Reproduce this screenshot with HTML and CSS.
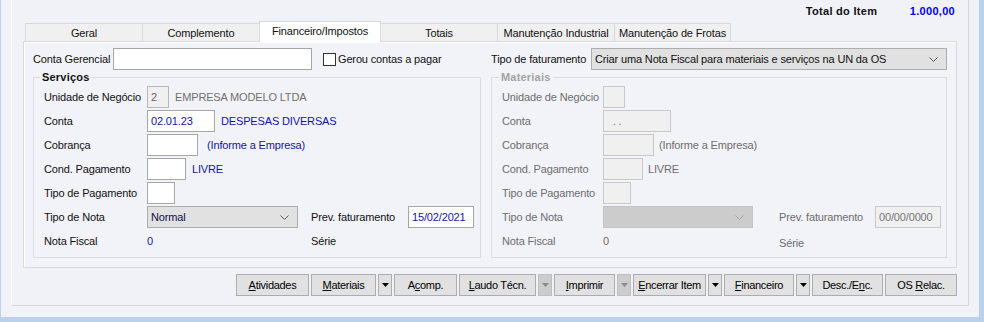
FILE: index.html
```html
<!DOCTYPE html>
<html lang="pt-BR">
<head>
    <meta charset="UTF-8">
    <title>Ordem de Serviço - Item</title>
    <link rel="stylesheet" href="styles.css">
</head>
<body>
    <div class="window">
        <div class="frame">
            <div class="header">
                <span class="total-label">Total do Item</span>
                <span class="total-value">1.000,00</span>
            </div>

            <!-- Tabs -->
            <div class="tabs">
                <div class="tab">Geral</div>
                <div class="tab">Complemento</div>
                <div class="tab active">Financeiro/Impostos</div>
                <div class="tab">Totais</div>
                <div class="tab">Manutenção Industrial</div>
                <div class="tab last">Manutenção de Frotas</div>
            </div>

            <div class="page">
                <div class="top-row">
                    <div class="top-left">
                        <span class="top-label">Conta Gerencial</span>
                        <span class="field w-conta-ger"></span>
                        <span class="checkbox"></span>
                        <span>Gerou contas a pagar</span>
                    </div>
                    <div class="top-right">
                        <span class="fat-label">Tipo de faturamento</span>
                        <div class="select w-fat">
                            <span>Criar uma Nota Fiscal para materiais e serviços na UN da OS</span>
                            <svg width="9" height="5" viewBox="0 0 9 5"><path d="M0.5 0.5 L4.5 4.5 L8.5 0.5" fill="none" stroke="#5a5a5a"/></svg>
                        </div>
                    </div>
                </div>

                <div class="groups">
                    <!-- Serviços -->
                    <fieldset class="group services">
                        <legend>Serviços</legend>
                        <div class="rows">
                            <span>Unidade de Negócio</span>
                            <div class="cell"><span class="field readonly w-un">2</span><span class="muted">EMPRESA MODELO LTDA</span></div>

                            <span>Conta</span>
                            <div class="cell"><span class="field w-conta blue">02.01.23</span><span class="blue">DESPESAS DIVERSAS</span></div>

                            <span>Cobrança</span>
                            <div class="cell"><span class="field w-cob"></span><span class="blue info">(Informe a Empresa)</span></div>

                            <span>Cond. Pagamento</span>
                            <div class="cell"><span class="field w-cond"></span><span class="blue">LIVRE</span></div>

                            <span>Tipo de Pagamento</span>
                            <div class="cell"><span class="field w-tipo"></span></div>

                            <span>Tipo de Nota</span>
                            <div class="select w-nota navy">
                                <span>Normal</span>
                                <svg width="9" height="5" viewBox="0 0 9 5"><path d="M0.5 0.5 L4.5 4.5 L8.5 0.5" fill="none" stroke="#5a5a5a"/></svg>
                            </div>
                            <span>Prev. faturamento</span>
                            <span class="field w-prev blue">15/02/2021</span>

                            <span>Nota Fiscal</span>
                            <span class="blue">0</span>
                            <span>Série</span>
                            <span></span>
                        </div>
                    </fieldset>

                    <!-- Materiais (desabilitado) -->
                    <fieldset class="group materials">
                        <legend>Materiais</legend>
                        <div class="rows">
                            <span>Unidade de Negócio</span>
                            <div class="cell"><span class="field off w-un"></span></div>

                            <span>Conta</span>
                            <div class="cell"><span class="field off w-conta">&nbsp;&nbsp;.&nbsp;.</span></div>

                            <span>Cobrança</span>
                            <div class="cell"><span class="field off w-cob"></span><span>(Informe a Empresa)</span></div>

                            <span>Cond. Pagamento</span>
                            <div class="cell"><span class="field off w-cond2"></span><span>LIVRE</span></div>

                            <span>Tipo de Pagamento</span>
                            <div class="cell"><span class="field off w-tipo"></span></div>

                            <span>Tipo de Nota</span>
                            <div class="select off w-nota2">
                                <span></span>
                                <svg width="9" height="5" viewBox="0 0 9 5"><path d="M0.5 0.5 L4.5 4.5 L8.5 0.5" fill="none" stroke="#a8a8a8"/></svg>
                            </div>
                            <span>Prev. faturamento</span>
                            <span class="field off w-prev">00/00/0000</span>

                            <span>Nota Fiscal</span>
                            <span>0</span>
                            <span class="low">Série</span>
                            <span></span>
                        </div>
                    </fieldset>
                </div>
            </div>

            <!-- Botões -->
            <div class="buttons">
                <button class="btn w-ativ"><u>A</u>tividades</button>
                <button class="btn w-mat"><u>M</u>ateriais</button>
                <button class="drop"><svg width="7" height="4" viewBox="0 0 7 4"><polygon points="0,0 7,0 3.5,4" fill="#000"/></svg></button>
                <button class="btn w-acomp">A<u>c</u>omp.</button>
                <button class="btn w-laudo"><u>L</u>audo Técn.</button>
                <button class="drop off"><svg width="7" height="4" viewBox="0 0 7 4"><polygon points="0,0 7,0 3.5,4" fill="#8a8a8a"/></svg></button>
                <button class="btn w-impr"><u>I</u>mprimir</button>
                <button class="drop off"><svg width="7" height="4" viewBox="0 0 7 4"><polygon points="0,0 7,0 3.5,4" fill="#8a8a8a"/></svg></button>
                <button class="btn w-enc"><u>E</u>ncerrar Item</button>
                <button class="drop"><svg width="7" height="4" viewBox="0 0 7 4"><polygon points="0,0 7,0 3.5,4" fill="#000"/></svg></button>
                <button class="btn w-fin"><u>F</u>inanceiro</button>
                <button class="drop"><svg width="7" height="4" viewBox="0 0 7 4"><polygon points="0,0 7,0 3.5,4" fill="#000"/></svg></button>
                <button class="btn w-desc">Desc./E<u>n</u>c.</button>
                <button class="btn w-os">OS <u>R</u>elac.</button>
            </div>
        </div>
    </div>
</body>
</html>
```

FILE: styles.css
```css
body {
    margin: 0;
    background: #b9d1ea;
    font-family: "Liberation Sans", Arial, sans-serif;
    font-size: 11px;
    letter-spacing: -0.15px;
    color: #111;
    overflow: hidden;
}
.window {
    margin-left: 1px;
    width: 978px;
    height: 317px;
    background: #f0f2f8;
}
.frame {
    margin-left: 10px;
    width: 958px;
    height: 306px;
    box-sizing: border-box;
    border-left: 1px solid #fff;
    border-right: 1px solid #d6d6d6;
    border-bottom: 1px solid #d6d6d6;
    padding: 0 11px;
}

/* header */
.header {
    height: 21px;
    display: flex;
    justify-content: flex-end;
    align-items: center;
    padding-right: 2px;
}
.total-label {
    font-weight: bold;
    width: 104px;
    letter-spacing: 0.3px;
}
.total-value {
    font-weight: bold;
    color: #0000ff;
    letter-spacing: 0.3px;
}

/* tabs */
.tabs {
    display: flex;
    align-items: flex-end;
    height: 20px;
    padding-left: 2px;
}
.tab {
    width: 118px;
    height: 18px;
    box-sizing: border-box;
    margin-left: -1px;
    border: 1px solid #d9d9d9;
    border-bottom: 0;
    background: #f0f0f0;
    text-align: center;
    line-height: 18px;
}
.tab:first-child {
    margin-left: 0;
}
.tab.active {
    width: 122px;
    height: 21px;
    margin-bottom: -1px;
    background: #fff;
    position: relative;
    z-index: 1;
    line-height: 18px;
}
.tab.last {
    width: 117px;
}

/* page */
.page {
    border: 1px solid #d9d9d9;
    box-shadow: inset 1px 1px 0 #fff;
    background: #f2f3f9;
    padding: 5px 9px 9px;
}
.top-row {
    display: flex;
    align-items: center;
    height: 24px;
}
.top-left {
    width: 458px;
    display: flex;
    align-items: center;
}
.top-label {
    width: 80px;
}
.top-right {
    display: flex;
    align-items: center;
}
.fat-label {
    width: 100px;
}
.checkbox {
    width: 13px;
    height: 13px;
    box-sizing: border-box;
    border: 1px solid #333;
    background: #fff;
    margin: 0 2px 0 11px;
}

/* controls */
.field {
    display: block;
    height: 22px;
    box-sizing: border-box;
    border: 1px solid #a6a6a6;
    background: #fff;
    padding: 0 3px;
    line-height: 21px;
    white-space: nowrap;
}
.field.readonly {
    background: #f0f0f0;
    border-color: #b8b8b8;
    color: #666;
}
.field.off {
    background: #f0f0f0;
    border-color: #c8c8c8;
    color: #777;
}
.select {
    height: 22px;
    box-sizing: border-box;
    display: flex;
    justify-content: space-between;
    align-items: center;
    border: 1px solid #adadad;
    background: #e1e1e1;
    padding: 0 8px 0 3px;
}
.select.off {
    background: #cccccc;
    border-color: #c4c4c4;
}
.w-conta-ger { width: 199px; }
.w-fat { width: 356px; }
.w-un { width: 22px; }
.w-conta { width: 68px; }
.w-cob { width: 51px; }
.w-cond { width: 39px; }
.w-cond2 { width: 40px; }
.w-tipo { width: 28px; }
.w-nota { width: 151px; }
.w-nota2 { width: 150px; }
.w-prev { width: 66px; }

.blue { color: #1414aa; }
.navy { color: #10104a; }
.muted { color: #707070; }

/* group boxes */
.groups {
    display: flex;
    gap: 10px;
}
.group {
    margin: 0;
    padding: 3px 0 5px 10px;
    border: 1px solid #dcdcdc;
    min-width: 0;
    box-sizing: border-box;
}
.group legend {
    padding: 0 2px;
    margin-left: -4px;
    font-weight: bold;
    letter-spacing: 0.2px;
}
.services {
    width: 448px;
}
.materials {
    width: 456px;
    color: #6d6d6d;
}
.materials legend {
    color: #a3a3a3;
    margin-left: -3px;
}
.rows {
    display: grid;
    grid-template-columns: 103px 164px 97px 66px;
    grid-auto-rows: 22px;
    row-gap: 2px;
    align-items: center;
}
.materials .rows {
    grid-template-columns: 101px 176px 96px 66px;
}
.cell {
    grid-column: 2 / -1;
    display: flex;
    align-items: center;
    gap: 6px;
}
.cell .info {
    margin-left: 3px;
}
.materials .cell span:not(.field) {
    margin-left: -1px;
}
.low {
    padding-top: 4px;
}

/* buttons */
.buttons {
    display: flex;
    justify-content: flex-end;
    gap: 2px;
    margin-top: 6px;
}
.btn, .drop {
    height: 22px;
    box-sizing: border-box;
    border: 1px solid #adadad;
    background: #e1e1e1;
    font-family: "Liberation Sans", Arial, sans-serif;
    font-size: 11px;
    letter-spacing: -0.3px;
    color: #000;
    padding: 0;
    margin: 0;
}
.drop {
    width: 14px;
    display: flex;
    align-items: center;
    justify-content: center;
}
.drop.off {
    background: #cccccc;
    border-color: #bfbfbf;
}
.w-ativ { width: 73px; }
.w-mat { width: 65px; }
.w-acomp { width: 63px; }
.w-laudo { width: 77px; }
.w-impr { width: 61px; }
.w-enc { width: 73px; }
.w-fin { width: 70px; }
.w-desc { width: 71px; }
.w-os { width: 72px; }
```
